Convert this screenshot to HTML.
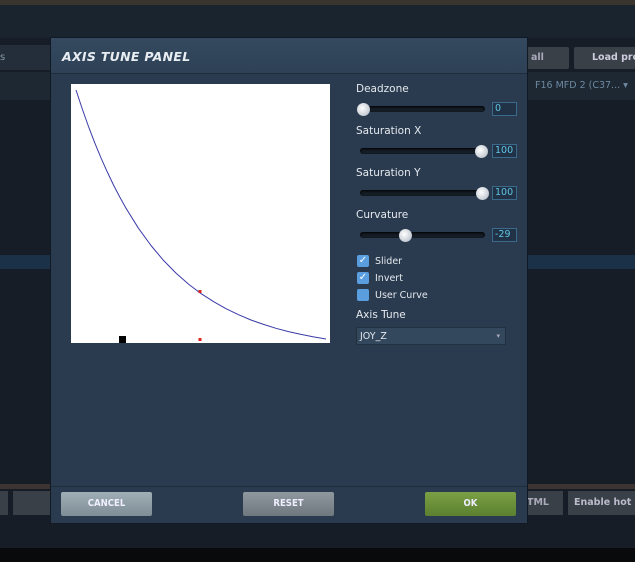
<!DOCTYPE html>
<html><head><meta charset="utf-8"><style>
*{margin:0;padding:0;box-sizing:border-box}
body{width:635px;height:562px;overflow:hidden;background:#161d26;font-family:"DejaVu Sans","Liberation Sans",sans-serif;position:relative}
.a{position:absolute}
.lbl{color:#e4e9ee;font-size:10.5px}
.track{position:absolute;height:6px;border-radius:3px;background:#141c25;box-shadow:inset 0 1px 2px #000}
.thumb{position:absolute;width:13px;height:13px;border-radius:50%;background:radial-gradient(circle at 40% 40%,#fff,#cdd3da 60%,#9aa4ae);}
.val{position:absolute;width:25px;height:14px;border:1px solid #3a6a8c;background:#213246;color:#5ec4e4;font-size:9.5px;padding-left:2px;line-height:12px}
.cb{position:absolute;width:12px;height:12px;border-radius:2px;background:#5b9ee0;color:#fff;font-size:10px;line-height:12px;text-align:center}
.btn{position:absolute;top:492px;width:91px;height:24px;border-radius:2px;color:#eef;font-size:9.5px;font-weight:bold;text-align:center;line-height:24px;font-family:"DejaVu Sans Condensed","DejaVu Sans",sans-serif}
</style></head><body>
<div class="a" style="left:0;top:0;width:635px;height:5px;background:#3a342e"></div>
<div class="a" style="left:0;top:5px;width:635px;height:33px;background:#1a242f"></div>
<div class="a" style="left:0;top:45px;width:50px;height:25px;background:#232e3a;color:#8899aa;font-size:10px;line-height:25px">s</div>
<div class="a" style="left:0;top:72px;width:635px;height:28px;background:#1e2833"></div>
<div class="a" style="left:0;top:255px;width:635px;height:14px;background:#1b3148"></div>
<div class="a" style="left:527px;top:47px;width:42px;height:22px;background:#3a4048;color:#aab;font-size:9.5px;font-weight:bold;line-height:22px;padding-left:4px;border-radius:2px">all</div>
<div class="a" style="left:574px;top:47px;width:70px;height:22px;background:#3a4048;color:#ccd;font-size:9.5px;font-weight:bold;line-height:22px;padding-left:18px;border-radius:2px;white-space:nowrap">Load profi</div>
<div class="a" style="left:535px;top:80px;color:#6d8aa3;font-size:9.5px;white-space:nowrap">F16 MFD 2 (C37... ▾</div>
<div class="a" style="left:0;top:484px;width:635px;height:5px;background:#3b3430"></div>
<div class="a" style="left:0;top:491px;width:8px;height:24px;background:#3a4048"></div>
<div class="a" style="left:13px;top:491px;width:40px;height:24px;background:#3a4048"></div>
<div class="a" style="left:527px;top:491px;width:36px;height:24px;background:#3a4048;color:#aab;font-size:9.5px;font-weight:bold;line-height:24px">TML</div>
<div class="a" style="left:568px;top:491px;width:70px;height:24px;background:#3a4048;color:#bbc;font-size:9.5px;font-weight:bold;line-height:24px;padding-left:6px;white-space:nowrap">Enable hot pl</div>
<div class="a" style="left:0;top:548px;width:635px;height:14px;background:#080a0c"></div>

<div class="a" style="left:50px;top:37px;width:478px;height:487px;background:#2b3b4f;border:1px solid #111a24">
 <div class="a" style="left:0;top:0;width:476px;height:36px;background:linear-gradient(#34495f,#2e4156);border-bottom:1px solid #1f2c3a"></div>
 <div class="a" style="left:11px;top:11px;color:#e8edf2;font-size:12.5px;font-weight:bold;font-style:italic;letter-spacing:0.3px">AXIS TUNE PANEL</div>
 <div class="a" style="left:0;top:448px;width:476px;height:1px;background:#1f2c3a"></div>
</div>

<svg class="a" style="left:71px;top:84px" width="259" height="259" viewBox="71 84 259 259">
<rect x="71" y="84" width="259" height="259" fill="#fff"/>
<polyline fill="none" stroke="#3a3aa8" stroke-width="1" stroke-linejoin="round" points="76,90 82.25,108.9 88.5,126.5 94.75,142.8 101,157.9 107.25,171.9 113.5,185 119.75,197 126,208.2 138.5,228.3 151,245.5 163.5,260.4 176,273.1 188.5,284.1 201,293.6 213.5,301.6 226,308.7 238.5,314.7 251,320 263.5,324.4 276,328.3 288.5,331.6 301,334.4 313.5,336.9 326,339"/>
<rect x="198.5" y="290" width="3" height="3" fill="#d22"/>
<rect x="198.5" y="338" width="3" height="3" fill="#d22"/>
<rect x="119" y="336" width="7" height="7" fill="#000"/>
</svg>

<div class="a lbl" style="left:356px;top:83px">Deadzone</div>
<div class="track" style="left:360px;top:106px;width:125px"></div>
<div class="thumb" style="left:357px;top:103px"></div>
<div class="val" style="left:492px;top:102px">0</div>

<div class="a lbl" style="left:356px;top:125px">Saturation X</div>
<div class="track" style="left:360px;top:148px;width:125px"></div>
<div class="thumb" style="left:475px;top:145px"></div>
<div class="val" style="left:492px;top:144px">100</div>

<div class="a lbl" style="left:356px;top:167px">Saturation Y</div>
<div class="track" style="left:360px;top:190px;width:125px"></div>
<div class="thumb" style="left:476px;top:187px"></div>
<div class="val" style="left:492px;top:186px">100</div>

<div class="a lbl" style="left:356px;top:209px">Curvature</div>
<div class="track" style="left:360px;top:232px;width:125px"></div>
<div class="thumb" style="left:399px;top:229px"></div>
<div class="val" style="left:492px;top:228px">-29</div>

<div class="cb" style="left:357px;top:255px">✓</div>
<div class="a lbl" style="left:375px;top:256px;font-size:9.5px">Slider</div>
<div class="cb" style="left:357px;top:272px">✓</div>
<div class="a lbl" style="left:375px;top:273px;font-size:9.5px">Invert</div>
<div class="cb" style="left:357px;top:289px"></div>
<div class="a lbl" style="left:375px;top:290px;font-size:9.5px">User Curve</div>

<div class="a lbl" style="left:356px;top:309px">Axis Tune</div>
<div class="a" style="left:356px;top:327px;width:150px;height:18px;background:#33475d;border:1px solid #22303f;color:#e4e9ee;font-size:9.5px;line-height:17px;padding-left:3px">JOY_Z<span style="position:absolute;right:5px;top:0;font-size:7px;color:#aab">▾</span></div>

<div class="btn" style="left:61px;background:linear-gradient(#a0aeb6,#7f8d96)">CANCEL</div>
<div class="btn" style="left:243px;background:linear-gradient(#8e989e,#6e787e)">RESET</div>
<div class="btn" style="left:425px;background:linear-gradient(#7ba044,#5b8030)">OK</div>
</body></html>
